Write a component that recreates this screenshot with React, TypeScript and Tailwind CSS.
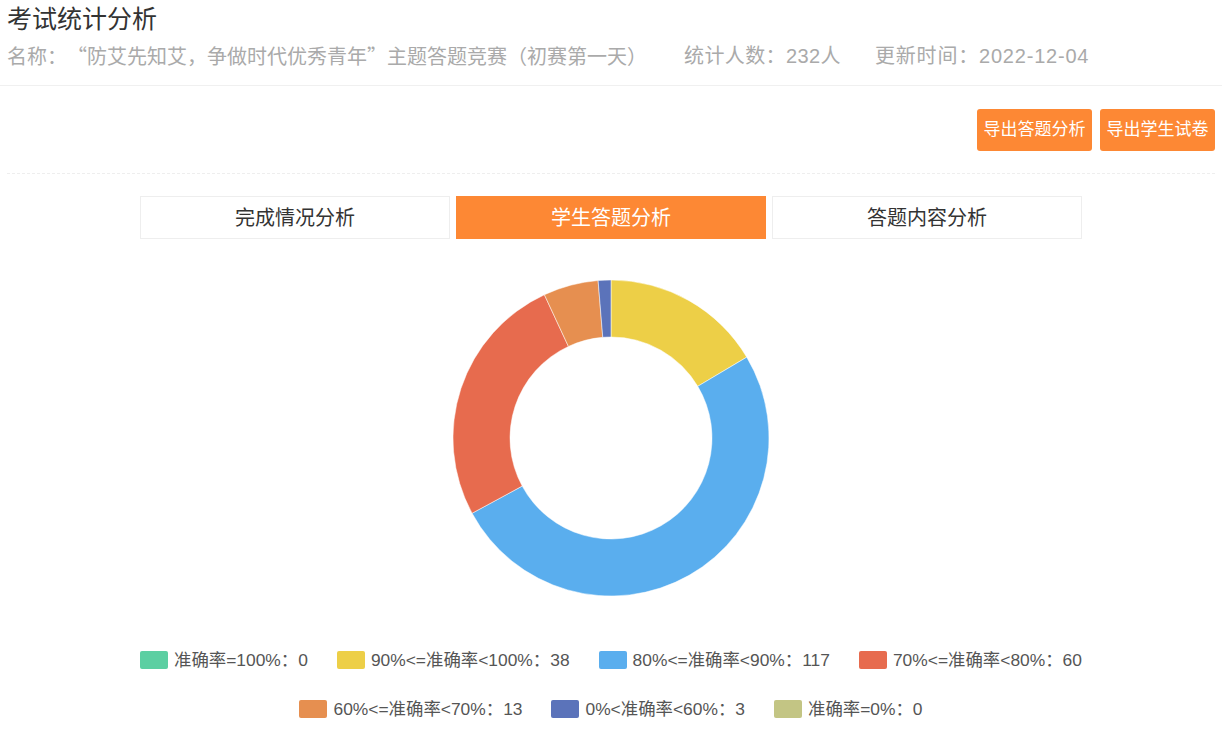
import { useState } from 'react';

const legend = [
  { label: '准确率=100%：0', value: 0, color: '#5ccfa2' },
  { label: '90%<=准确率<100%：38', value: 38, color: '#edcf47' },
  { label: '80%<=准确率<90%：117', value: 117, color: '#5aaeee' },
  { label: '70%<=准确率<80%：60', value: 60, color: '#e76b4e' },
  { label: '60%<=准确率<70%：13', value: 13, color: '#e68f50' },
  { label: '0%<准确率<60%：3', value: 3, color: '#5b73ba' },
  { label: '准确率=0%：0', value: 0, color: '#c3c584' },
];

const tabs = ['完成情况分析', '学生答题分析', '答题内容分析'];

// donut slices, clockwise from 12 o'clock
const Donut = () => {
  const size = 318;
  const c = size / 2;
  const ro = 158;
  const ri = 101;
  const total = legend.reduce((s, d) => s + d.value, 0);
  let start = 0;

  const pt = (r: number, a: number) => [c + r * Math.sin(a), c - r * Math.cos(a)];

  return (
    <svg width={size} height={size} viewBox={`0 0 ${size} ${size}`}>
      {legend
        .filter(d => d.value > 0)
        .map(d => {
          const sweep = (d.value / total) * Math.PI * 2;
          const end = start + sweep;
          const large = sweep > Math.PI ? 1 : 0;
          const [x1, y1] = pt(ro, start);
          const [x2, y2] = pt(ro, end);
          const [x3, y3] = pt(ri, end);
          const [x4, y4] = pt(ri, start);
          const path = `M${x1} ${y1} A${ro} ${ro} 0 ${large} 1 ${x2} ${y2} L${x3} ${y3} A${ri} ${ri} 0 ${large} 0 ${x4} ${y4} Z`;
          start = end;
          return <path key={d.label} d={path} fill={d.color} stroke="#fff" strokeWidth={0.5} />;
        })}
    </svg>
  );
};

const LegendItem = ({ label, color }: { label: string; color: string }) => (
  <div className="flex items-center gap-[6px]">
    <span className="w-[28px] h-[18px] rounded-[2px]" style={{ backgroundColor: color }} />
    <span>{label}</span>
  </div>
);

const App = () => {
  const [active, setActive] = useState(1);

  return (
    <div className="w-[1222px] h-[750px] bg-white overflow-hidden [text-spacing-trim:space-all] font-['Liberation_Sans','Noto_Sans_CJK_SC',sans-serif]">
      {/* header */}
      <div className="px-[7px] border-b border-[#f0f0f0] h-[86px]">
        <h1 className="text-[25px] leading-[36px] text-[#333] pt-[1px]">考试统计分析</h1>
        <div className="flex text-[20px] leading-[36px] text-[#aaa] mt-[1px]">
          <span className="font-['Noto_Sans_CJK_SC',sans-serif]">名称：“防艾先知艾，争做时代优秀青年”主题答题竞赛（初赛第一天）</span>
          <span className="ml-[37px] tracking-[0.4px]">统计人数：232人</span>
          <span className="ml-[34px] tracking-[0.8px]">更新时间：2022-12-04</span>
        </div>
      </div>

      {/* export buttons */}
      <div className="flex justify-end gap-[8px] pt-[23px] pb-[22px] mx-[7px] border-b border-dashed border-[#eee]">
        <button className="w-[115px] h-[42px] rounded-[3px] bg-[#fd8834] text-white text-[17px]">导出答题分析</button>
        <button className="w-[115px] h-[42px] rounded-[3px] bg-[#fd8834] text-white text-[17px]">导出学生试卷</button>
      </div>

      {/* tabs */}
      <div className="flex justify-center gap-[6px] mt-[22px]">
        {tabs.map((t, i) => (
          <button
            key={t}
            onClick={() => setActive(i)}
            className={
              i === active
                ? 'w-[310px] h-[43px] bg-[#fd8834] text-white text-[20px]'
                : 'w-[310px] h-[43px] bg-white border border-[#eee] text-[#333] text-[20px]'
            }
          >
            {t}
          </button>
        ))}
      </div>

      {/* chart */}
      <div className="flex justify-center mt-[40px]">
        <Donut />
      </div>

      {/* legend */}
      <div className="flex flex-col items-center gap-[31px] mt-[54px] text-[17.4px] leading-[18px] text-[#555]">
        <div className="flex gap-[29px]">
          {legend.slice(0, 4).map(d => (
            <LegendItem key={d.label} label={d.label} color={d.color} />
          ))}
        </div>
        <div className="flex gap-[29px]">
          {legend.slice(4).map(d => (
            <LegendItem key={d.label} label={d.label} color={d.color} />
          ))}
        </div>
      </div>
    </div>
  );
};

export default App;
